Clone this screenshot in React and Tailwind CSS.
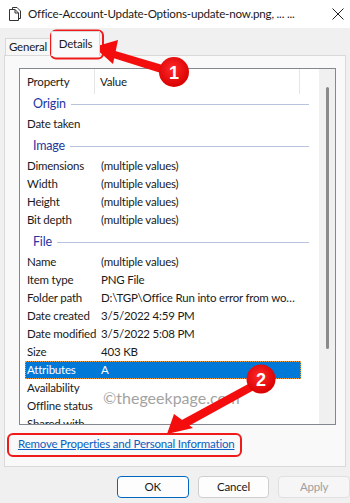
import React from 'react';

const rows = [
  { type: 'group', label: 'Origin', first: true },
  { label: 'Date taken', value: '' },
  { type: 'group', label: 'Image' },
  { label: 'Dimensions', value: '(multiple values)' },
  { label: 'Width', value: '(multiple values)' },
  { label: 'Height', value: '(multiple values)' },
  { label: 'Bit depth', value: '(multiple values)' },
  { type: 'group', label: 'File' },
  { label: 'Name', value: '(multiple values)' },
  { label: 'Item type', value: 'PNG File' },
  { label: 'Folder path', value: 'D:\\TGP\\Office Run into error from wo…' },
  { label: 'Date created', value: '3/5/2022 4:59 PM' },
  { label: 'Date modified', value: '3/5/2022 5:08 PM' },
  { label: 'Size', value: '403 KB' },
  { label: 'Attributes', value: 'A', selected: true },
  { label: 'Availability', value: '' },
  { label: 'Offline status', value: '' },
  { label: 'Shared with', value: '' },
];

const FileIcon = () => (
  <svg width="12" height="14" viewBox="0 0 12 14" fill="none" stroke="#333" strokeWidth="1">
    <path d="M3.5 2.5 V0.5 H8 L11.5 4 V11.5 H9.5" />
    <path d="M0.5 2.5 H6 L9.5 6 V13.5 H0.5 Z" />
    <path d="M6 2.5 V6 H9.5" />
  </svg>
);

const Annotations = () => (
  <svg className="absolute inset-0 pointer-events-none" width="350" height="503" viewBox="0 0 350 503">
    <defs>
      <radialGradient id="dot" cx="45%" cy="40%" r="60%">
        <stop offset="0%" stopColor="#ff2a2a" />
        <stop offset="100%" stopColor="#d90000" />
      </radialGradient>
    </defs>
    {/* box round Details */}
    <rect x="51" y="30.5" width="52" height="28" rx="5" fill="none" stroke="#f01a1a" strokeWidth="2" />
    {/* arrow 1 */}
    <polygon points="112,50 166,66 164,74 110,57" fill="#f40d0d" />
    <polygon points="94,47 118,40 113,64" fill="#f40d0d" />
    <circle cx="174" cy="72" r="15" fill="url(#dot)" />
    <text x="174" y="78.5" textAnchor="middle" fontFamily="Liberation Sans, Arial, sans-serif" fontSize="18" fontWeight="bold" fill="#fff">1</text>
    {/* box round link */}
    <rect x="8" y="434" width="233" height="22" rx="5" fill="none" stroke="#f01a1a" strokeWidth="2" />
    {/* arrow 2 */}
    <polygon points="180,421 250,383 254,390 185,428" fill="#f40d0d" />
    <polygon points="167,434 174,414 193,428" fill="#f40d0d" />
    <circle cx="261" cy="379" r="14.5" fill="url(#dot)" />
    <text x="261" y="385.5" textAnchor="middle" fontFamily="Liberation Sans, Arial, sans-serif" fontSize="18" fontWeight="bold" fill="#fff">2</text>
  </svg>
);

export default function App() {
  return (
    <div className="relative w-[350px] h-[503px] overflow-hidden bg-[#f0f0f0] text-[11.5px] tracking-[-0.2px] text-[#1a1a1a]" style={{ fontFamily: 'Lato, "Noto Sans", sans-serif' }}>
      {/* title bar */}
      <div className="h-[28px] bg-white flex items-center">
        <div className="ml-[9px] w-[12px] flex items-center"><FileIcon /></div>
        <div className="ml-[7px] w-[304px] whitespace-nowrap text-[11.6px]">Office-Account-Update-Options-update-now.png, ... ...</div>
        <svg width="12" height="12" viewBox="0 0 12 12" stroke="#222" strokeWidth="1">
          <path d="M0.5 0.5 L11.5 11.5 M11.5 0.5 L0.5 11.5" />
        </svg>
      </div>

      {/* tabs */}
      <div className="h-[27px] flex items-end pl-[5px]">
        <div className="h-[17px] w-[46px] border border-b-0 border-[#d9d9d9] bg-[#f7f7f7] flex items-center justify-center">
          <span className="leading-none">General</span>
        </div>
        <div className="h-[25px] w-[49px] border border-b-0 border-[#d9d9d9] bg-[#fafafa] flex items-center justify-center -mb-[1px] relative z-10">
          <span className="leading-none">Details</span>
        </div>
      </div>

      {/* tab panel */}
      <div className="mx-[4px] h-[412px] border border-[#d9d9d9] bg-[#f9f9f9] flex flex-col">
        <div className="ml-[14px] mt-[12px] w-[317px] h-[357px] border border-[#828790] bg-white flex overflow-hidden">
          <div className="w-[299px] flex flex-col">
            {/* header */}
            <div className="h-[25px] flex shrink-0">
              <div className="w-[75px] pl-[7px] flex items-center border-r border-[#e5e5e5]">Property</div>
              <div className="w-[205px] pl-[5px] flex items-center border-r border-[#e5e5e5]">Value</div>
            </div>
            {rows.map((r, i) =>
              r.type === 'group' ? (
                <div key={i} className={`${r.first ? 'h-[21px]' : 'h-[24px] pt-[3px]'} shrink-0 flex`}>
                  <div className="h-[21px] flex items-center pl-[13px] w-[289px]">
                    <span className="text-[#2536a0] text-[12.5px] leading-none">{r.label}</span>
                    <div className="flex-1 ml-[5px] h-px bg-[#b9c3de]" />
                  </div>
                </div>
              ) : (
                <div key={i} className="h-[18px] shrink-0 pl-[5px]">
                  <div className={`h-[18px] w-[276px] flex items-center ${r.selected ? 'bg-[#0078d7] text-white outline outline-1 outline-dotted outline-[#f0a040] -outline-offset-1' : ''}`}>
                    <div className="w-[76px] pl-[2px] whitespace-nowrap">{r.label}</div>
                    <div className="whitespace-nowrap">{r.value}</div>
                  </div>
                </div>
              )
            )}
          </div>
          {/* scrollbar */}
          <div className="w-[16px] bg-[#f0f0f0] flex justify-center pl-[1px]">
            <div className="mt-[18px] w-[3px] h-[262px] rounded-full bg-[#8a8a8a]" />
          </div>
        </div>
        <div className="flex-1 flex items-center pl-[13px] pb-[3px]">
          <span className="text-[#0a5fc2] underline">Remove Properties and Personal Information</span>
        </div>
      </div>

      {/* buttons */}
      <div className="flex gap-[9px] pl-[117px] pt-[9px]">
        <button className="w-[72px] h-[22px] rounded-[4px] border border-[#0067c0] bg-[#fdfdfd] leading-none">OK</button>
        <button className="w-[72px] h-[22px] rounded-[4px] border border-[#cfcfcf] bg-[#fdfdfd] leading-none">Cancel</button>
        <button className="w-[72px] h-[22px] rounded-[4px] border border-[#e0e0e0] bg-[#f6f6f6] text-[#a0a0a0] leading-none">Apply</button>
      </div>

      {/* watermark */}
      <div className="absolute left-[103px] top-[390px] text-[16px] tracking-normal text-[#8c8c8c] opacity-80 leading-none pointer-events-none">©thegeekpage.com</div>

      <Annotations />
    </div>
  );
}
